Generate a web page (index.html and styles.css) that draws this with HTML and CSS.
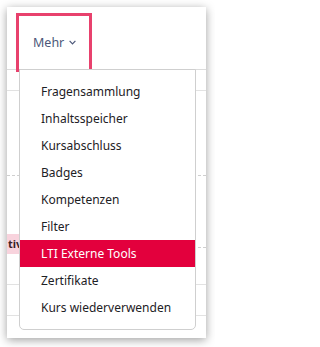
FILE: index.html
```html
<!DOCTYPE html>
<html lang="de">
<head>
<meta charset="utf-8">
<link rel="stylesheet" href="styles.css">
</head>
<body>
<div class="panel">
  <div class="nav">
    <div class="nav-item">
      <span class="nav-label">Mehr</span>
      <svg class="chev" width="7" height="5" viewBox="0 0 7 5"><path d="M0.6 0.9 L3.5 3.8 L6.4 0.9" fill="none" stroke="#4b5779" stroke-width="1.2"/></svg>
    </div>
  </div>
  <div class="row r1"></div>
  <div class="row r2"></div>
  <div class="row r3"><span class="badge">tiv</span></div>
  <div class="row r4"></div>
  <div class="row r5"></div>

  <ul class="menu">
    <li class="item">Fragensammlung</li>
    <li class="item">Inhaltsspeicher</li>
    <li class="item">Kursabschluss</li>
    <li class="item">Badges</li>
    <li class="item">Kompetenzen</li>
    <li class="item">Filter</li>
    <li class="item active">LTI Externe Tools</li>
    <li class="item">Zertifikate</li>
    <li class="item">Kurs wiederverwenden</li>
  </ul>
</div>
</body>
</html>
```

FILE: styles.css
```css
html, body {
  margin: 0;
  padding: 0;
  background: #ffffff;
}
body {
  width: 215px;
  height: 347px;
  overflow: hidden;
  font-family: "Noto Sans", "Open Sans", sans-serif;
}
.panel {
  position: relative;
  margin: 7px 9px 9px 7px;
  width: 199px;
  height: 331px;
  background: #ffffff;
  box-shadow: 0 2px 9px rgba(0, 0, 0, 0.38);
  overflow: hidden;
}
.nav {
  border-bottom: 1px solid #dcdcdc;
  padding-left: 9px;
  padding-top: 6px;
  box-sizing: border-box;
  height: 63px;
}
.nav-item {
  width: 76px;
  height: 59px;
  box-sizing: border-box;
  border: 3px solid #e8416d;
  display: flex;
  align-items: center;
  padding-left: 14px;
  padding-bottom: 1px;
  gap: 5px;
  position: relative;
  z-index: 1;
}
.nav-label {
  font-size: 12.5px;
  color: #4b5779;
}
.chev {
  margin-top: 1px;
}
.row {
  border-bottom: 1px solid #e2e2e2;
  box-sizing: border-box;
}
.r1 { height: 21px; }
.r2 { height: 85px; border-bottom: 1px dashed #cfcfcf; }
.r3 { height: 72px; border-bottom: 1px dashed #cfcfcf; position: relative; }
.r4 { height: 37px; }
.r5 { height: 31px; }
.badge {
  display: block;
  position: absolute;
  left: 0;
  top: 58px;
  height: 20px;
  padding: 0 4px 0 1px;
  background: #f8d3dd;
  color: #3a1f28;
  font-weight: 700;
  font-size: 11px;
  line-height: 20px;
  white-space: nowrap;
}
.menu {
  position: absolute;
  left: 12px;
  top: 62px;
  width: 177px;
  margin: 0;
  padding: 8px 0;
  list-style: none;
  background: #ffffff;
  border: 1px solid #cfcfcf;
  border-radius: 0 0 5px 5px;
  box-sizing: border-box;
  z-index: 2;
}
.item {
  height: 27px;
  line-height: 27px;
  padding-left: 21px;
  font-size: 12px;
  color: #1d2125;
  white-space: nowrap;
}
.item.active {
  background: #e3003d;
  color: #ffffff;
}
```
